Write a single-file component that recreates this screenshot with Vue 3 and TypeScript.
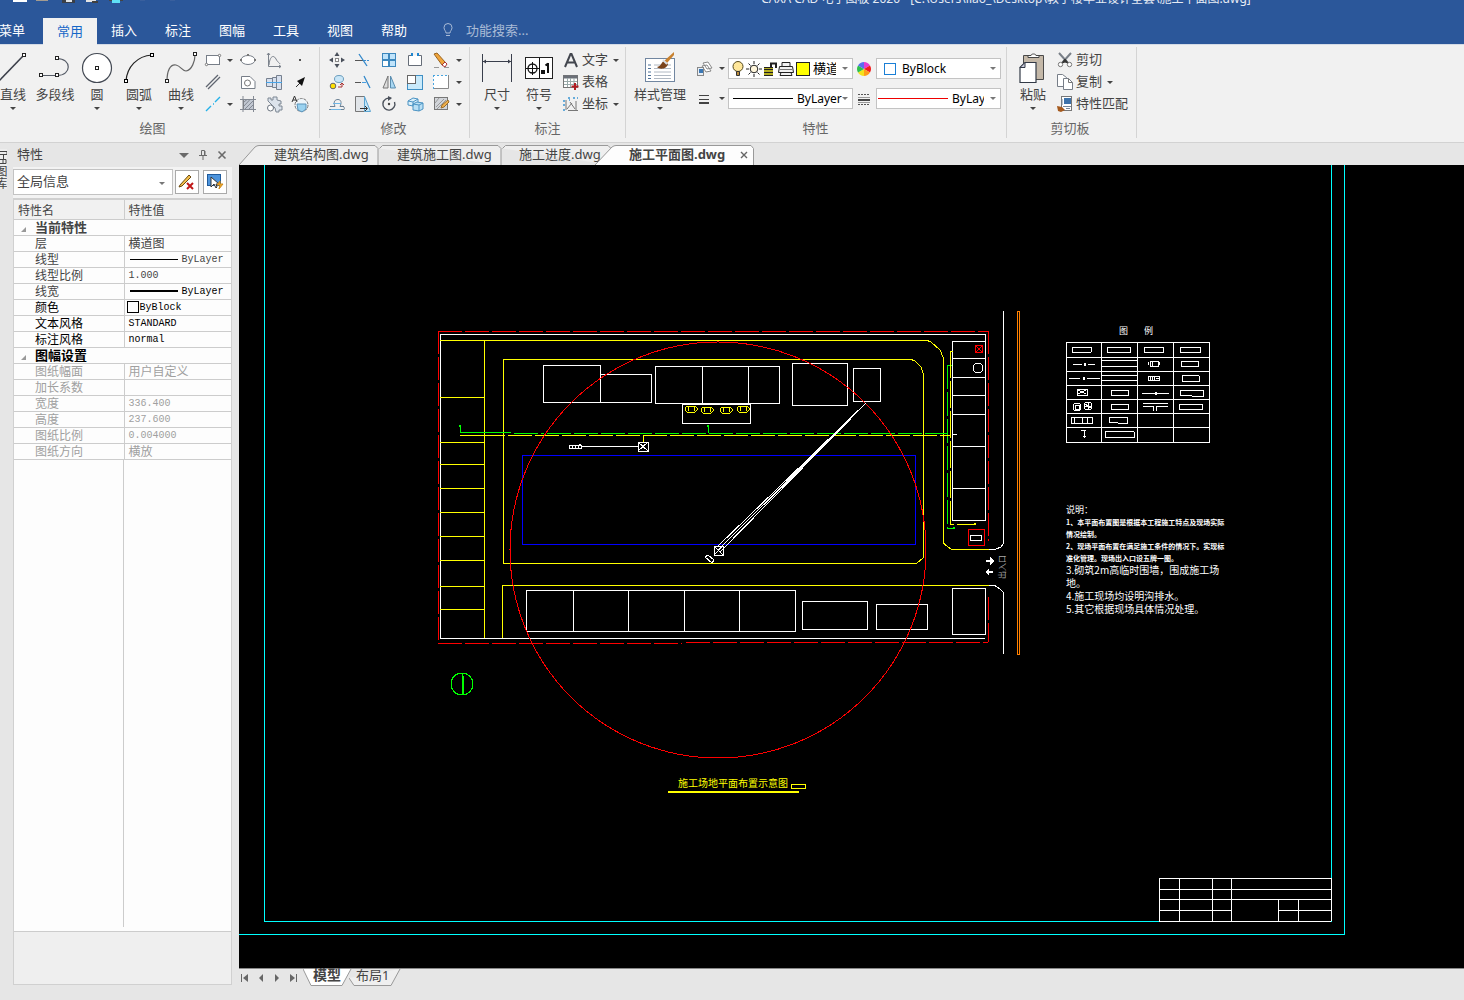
<script setup lang="ts">
import { ref } from 'vue'

interface BigTool { label: string; icon: string; arrow: boolean }
interface PropRow { name: string; value: string; tone: string; line?: number; swatch?: boolean }

const menus = ['菜单', '常用', '插入', '标注', '图幅', '工具', '视图', '帮助']
const activeMenu = ref('常用')

const drawTools: BigTool[] = [
  { label: '直线', icon: 'line', arrow: true },
  { label: '多段线', icon: 'polyline', arrow: false },
  { label: '圆', icon: 'circle', arrow: true },
  { label: '圆弧', icon: 'arc', arrow: true },
  { label: '曲线', icon: 'spline', arrow: true },
]
const dimTools: BigTool[] = [
  { label: '尺寸', icon: 'dimension', arrow: true },
  { label: '符号', icon: 'symbol', arrow: true },
]
const drawGrid = ['rect', '>', 'ellipse', 'formula', 'point', 'parallel', '', 'hole', 'shaft', 'leader', 'center', '>', 'hatch', 'gear', 'detail']
const modifyGrid = ['move', 'trim', 'array', 'break', 'erase', '>', 'copyMove', 'extend', 'mirror', 'scale', 'stretch', '>', 'offset', 'chamfer', 'rotate', 'explode', 'edit', '>']
const dimRows = [
  { label: '文字', icon: 'text', arrow: true },
  { label: '表格', icon: 'table', arrow: false },
  { label: '坐标', icon: 'coord', arrow: true },
]
const clipRows = [
  { label: '剪切', icon: 'cut', arrow: false },
  { label: '复制', icon: 'copy', arrow: true },
  { label: '特性匹配', icon: 'match', arrow: false },
]

const big: Record<string, string> = {
  line: '<path d="M3 30 28 4" stroke="#3b3f4a" stroke-width="1.6"/><rect x="26.500" y="2.500" width="3" height="3" fill="#fff" stroke="#222"/>',
  polyline: '<path d="M3 24.500H19M19 24.500C34 24.500 34 7.500 19 7.500" stroke="#555b66" fill="none" stroke-width="1.2"/><g fill="#fff" stroke="#222"><rect x="1.500" y="22.500" width="3" height="3"/><rect x="17.500" y="22.500" width="3" height="3"/><rect x="17.500" y="5.500" width="3" height="3"/></g>',
  circle: '<circle cx="17" cy="17" r="14.5" fill="#fff" stroke="#444a54" stroke-width="1.2"/><rect x="15.500" y="15.500" width="3" height="3" fill="#fff" stroke="#222"/>',
  arc: '<path d="M4 30C5 16 15 5 30 4" stroke="#222" fill="none" stroke-width="1.2"/><g fill="#fff" stroke="#000"><rect x="2.500" y="28.500" width="3" height="3"/><rect x="28.500" y="2.500" width="3" height="3"/></g>',
  spline: '<path d="M3 30C3 20 6 13 12 14C17 15 18 20 22 20C28 19 31 10 31 4" stroke="#666" fill="none" stroke-width="1.2"/><g fill="#fff" stroke="#222"><rect x="1.500" y="28.500" width="3" height="3"/><rect x="29.500" y="1.500" width="3" height="3"/></g>',
  dimension: '<path d="M2.500 3V31M31.500 3V31M3 10.500H31" stroke="#3a3f4c" fill="none"/><path d="M3 10.500 6 8.500V12.500ZM31 10.500 28 8.500V12.500Z" fill="#3a3f4c"/>',
  symbol: '<rect x="3.500" y="6.500" width="27" height="21" fill="#fff" stroke="#222"/><path d="M17.500 7V27M4 17.500H17M10.500 11V24" stroke="#111" fill="none"/><circle cx="10.500" cy="17.500" r="4.500" fill="none" stroke="#111" stroke-width="1.300"/><path d="M20 20h2v2h-2zM26 12v10M23.500 14.500 26 12.500" fill="none" stroke="#111" stroke-width="2"/>',
  style: '<rect x="2.500" y="7.500" width="29" height="23" fill="#fff" stroke="#7186a0"/><path d="M5 14h3M5 17.500h3M5 21h3M5 24.500h3M5 27.500h3" stroke="#4f7299"/><path d="M11 14h17M11 17.500h17M11 21h17M11 24.500h17M11 27.500h17" stroke="#b0b8c2"/><path d="M31 1 21 10 24 12 31 4Z" fill="#c8812f"/><path d="M22 10c-4 0-3 5-8 6 3 3 10 2 11-3z" fill="#7a431b"/><path d="M20 9l4 4" stroke="#d9dde2" stroke-width="2"/>',
  paste: '<path d="M7.500 4.500h20v24h-20z" fill="#c4b8a8" stroke="#4a4a4a"/><path d="M12 6.500v-2h3c0-2 5-2 5 0h3v2z" fill="#fff" stroke="#444"/><path d="M4 16.500l5-5h11v20H4z" fill="#fff" stroke="#333a47" stroke-width="1.200"/><path d="M4 16.500h5v-5z" fill="#ccd" stroke="#333a47"/>',
}

const small: Record<string, string> = {
  rect: '<rect x="2.500" y="4.500" width="13" height="9" fill="#fff" stroke="#777e88"/><circle cx="2.500" cy="13.500" r="1.200" fill="#fff" stroke="#777"/><circle cx="15.500" cy="4.500" r="1.200" fill="#fff" stroke="#777"/>',
  ellipse: '<ellipse cx="9" cy="9" rx="7" ry="4.500" fill="#fff" stroke="#777e88"/><g fill="#777"><path d="M1 8h2v2H1zM15 8h2v2h-2zM8 3h2v2H8z"/></g>',
  formula: '<path d="M3.500 2V15.500H16M2 4l1.500-2L5 4M14 14l2 1.500L14 17M4 14C5 4 9 4 11 8S14 11 15 13" stroke="#7b828c" fill="none"/>',
  point: '<path d="M8 8h2v2H8z" fill="#555"/>',
  parallel: '<path d="M2 14 14 2M4 16 16 4" stroke="#5f6570" stroke-width="1.300"/>',
  hole: '<path d="M2.500 3.500H11l5 5v7H2.500z" fill="#fff" stroke="#777e88"/><circle cx="8.500" cy="10" r="3" fill="#fff" stroke="#777"/>',
  shaft: '<path d="M1.500 5.500h6v8h-6zM7.500 4.500h4v10h-4zM11.500 2.500h5v14h-5z" fill="#d7e0ee" stroke="#76808f"/><path d="M1 9.500H17" stroke="#47a4e8"/>',
  leader: '<path d="M5 14 9 10" stroke="#333"/><path d="M14 4 11 13 6 8Z" fill="#111"/>',
  center: '<path d="M2 16 7 11M9 9h1M11 7l5-5" stroke="#24b1e8" stroke-width="1.400"/>',
  hatch: '<path d="M4.500 4.500h10v10h-10z" fill="#c2c8d2" stroke="#777"/><path d="M4 1V17M14.500 1V17M1 4.500H17M1 14.500H17M5 7l3-2.500M5 11l6-6.500M6 14l8-8M10 14l4-4" stroke="#838993" fill="none"/>',
  gear: '<path d="M3 6V3h3v2h2V2h4v3l4 1v3h-2v2h3v4h-3v2h-3l-1-4-4-4z" fill="#dce3ec" stroke="#7d8793"/><circle cx="5.500" cy="13" r="3" fill="#fff" stroke="#6b7480"/>',
  detail: '<circle cx="10.500" cy="10" r="6.500" fill="#eef5fa" stroke="#777" stroke-dasharray="3 1"/><path d="M6 9h9v5l-4 3-4-2z" fill="#9ad2f0" stroke="#5a93ba"/><path d="M1 7 3.500 1 6 7M2 5h3" stroke="#333" fill="none"/>',
  move: '<rect x="7.500" y="7.500" width="3" height="3" fill="#fff" stroke="#888"/><path d="M9 1l2.500 4h-5zM9 17l2.500-4h-5zM1 9l4-2.500v5zM17 9l-4-2.500v5z" fill="#4a505b"/>',
  trim: '<path d="M1 9.500H9" stroke="#555"/><path d="M10 9.500h6" stroke="#3f8fd0" stroke-dasharray="2 1"/><path d="M5 3l8 12" stroke="#2f86c9" stroke-width="1.300"/>',
  array: '<g stroke="#3c87bd" fill="#bfe3fa"><rect x="2.500" y="2.500" width="6" height="6"/><rect x="9.500" y="2.500" width="6" height="6"/><rect x="9.500" y="9.500" width="6" height="6"/><rect x="2.500" y="9.500" width="6" height="6" fill="#fff"/></g>',
  break: '<path d="M5 4.500H2.500v10h13v-10H13" stroke="#666d78" fill="#fff"/><path d="M5 2h2v3H5zM11 2h2v3h-2z" fill="#1e86d0"/>',
  erase: '<path d="M2 3l3-1 8 9-3 3z" fill="#f0a53c" stroke="#9a6420"/><path d="M10 14l3-3 2 2-2 3z" fill="#fff" stroke="#a33"/><path d="M2 16.500h5M12 16.500h5" stroke="#999"/>',
  copyMove: '<circle cx="5" cy="13" r="2.800" fill="#ffe000" stroke="#666"/><ellipse cx="11" cy="6" rx="4.500" ry="3.500" fill="#c9e6f7" stroke="#6b9dbd"/><path d="M10 14h4v-4M12 12l2-2 2 2" stroke="#a33" fill="none"/>',
  extend: '<path d="M1 9.500h6" stroke="#555"/><path d="M8 9.500h4" stroke="#4a9fe0"/><path d="M10 3l6 12" stroke="#2f86c9" stroke-width="1.300"/>',
  mirror: '<path d="M8 3v12H3z" fill="#ddd" stroke="#777"/><path d="M10.500 3v12h5z" fill="#a9d8f3" stroke="#5a8db0"/>',
  scale: '<rect x="1.500" y="2.500" width="15" height="14" fill="#c9eafb" stroke="#3f8fc4"/><rect x="1.500" y="2.500" width="8" height="8" fill="#fff" stroke="#666"/>',
  stretch: '<rect x="1.500" y="2.500" width="15" height="13" fill="#fff"/><path d="M16.500 2V15.500H1" stroke="#888" fill="none"/><path d="M1 2.500h16M1.500 2v14" stroke="#49a5df" stroke-dasharray="2 2"/>',
  offset: '<path d="M2 11.500h5c-2-5 0-7 3-7s4 3 2 7h4M1 14.500h15c1-1 0-4-3-3" stroke="#6d8295" fill="none"/><path d="M5 8.500h8M3 14.500h10" stroke="#6fb6e4"/>',
  chamfer: '<path d="M1.500 1.500h9v15h-9z" fill="#e1e5e9" stroke="#777"/><path d="M10.500 1.500l6 15h-6z" fill="#c3e5f8" stroke="#5ba4d1"/><path d="M6 13.500h7M11 11l2.500 2.500L11 16" stroke="#333" fill="none"/>',
  rotate: '<path d="M11 3.500A6 6 0 1 0 14.500 7" stroke="#4b515b" fill="none" stroke-width="1.400"/><path d="M8 1v5l4-3z" fill="#4b515b"/><circle cx="9" cy="9" r="1.200" fill="#444"/>',
  explode: '<path d="M2 6l5-3 5 1v5l-5 2-5-1z" fill="#d9effb" stroke="#4b93c3"/><path d="M7 9l4-2 6 1v6l-4 2-6-1z" fill="#b8dff5" stroke="#4b93c3"/><path d="M2 6l5 1v4M7 7l5-3M7 9l6 1v6M13 10l4-2" stroke="#4b93c3" fill="none"/>',
  edit: '<rect x="2.500" y="2.500" width="13" height="12" fill="#d2d5da" stroke="#777"/><path d="M4 12l8-8M5 14l9-9M3 8l4-5" stroke="#999"/><path d="M9 13l1-3 6-5 1 2-5 5z" fill="#f0b04c" stroke="#9b6c29"/>',
  text: '<path d="M3 16 8.500 3h1L15 16M5 11.500h8" stroke="#42464e" stroke-width="2" fill="none"/>',
  table: '<rect x="1.500" y="2.500" width="14" height="12" fill="#fff" stroke="#777"/><path d="M1.500 2.500h14v3h-14z" fill="#6b7078"/><path d="M2 8.500h13M2 11.500h13M5.500 5v9M8.500 5v9M12 5v9" stroke="#9aa"/><path d="M13 10v7M9.500 13.500h7" stroke="#b01c22" stroke-width="2"/>',
  coord: '<path d="M4 5v10M6 15.500h10M5 14l5-6M8 7l5 7M14 6v9" stroke="#777" fill="none"/><path d="M1 6h2M1 10h2M1 15h2M6 3h2M11 3h2M15 3h1M7 5h1" stroke="#3a95d2" stroke-width="1.500"/>',
  cut: '<path d="M3 2l9 10M15 2L6 12" stroke="#7a8088" stroke-width="2"/><path d="M6 12l3-4 3 4-3-1z" fill="#333" stroke="#333"/><circle cx="4.500" cy="13.500" r="2.200" fill="#fff" stroke="#777"/><circle cx="13.500" cy="13.500" r="2.200" fill="#fff" stroke="#777"/>',
  copy: '<path d="M1.500 1.500h5l4 3v9h-9z" fill="#fff" stroke="#777e88"/><path d="M7.500 5.500h5l4 4v7h-9z" fill="#fff" stroke="#777e88"/><path d="M12.500 5.500v4h4" fill="none" stroke="#777"/>',
  match: '<rect x="5.500" y="1.500" width="10" height="14" fill="#fff" stroke="#777"/><path d="M8 3h7v6H8z" fill="#3d72aa"/><path d="M6 4v6M7 11.500h8M10 13.500h4" stroke="#789"/><path d="M1 11l5 1 3 3-4 2-3-1z" fill="#a55a1e"/>',
  layer: '<path d="M8 3l5-1 4 6-5 1zM7 6l5-1 4 6-5 1z" fill="#fff" stroke="#888"/><rect x="2.500" y="7.500" width="6" height="8" fill="#e8eef5" stroke="#888"/><rect x="4" y="9" width="4" height="4" fill="#3b78b5"/>',
  weight: '<path d="M4 5.500h10M4 9.500h10" stroke="#444"/><path d="M4 13h10" stroke="#444" stroke-width="2"/>',
  wheel: '<path d="M9 9V2a7 7 0 0 1 6 3.500z" fill="#e63bd0"/><path d="M9 9l6-3.500a7 7 0 0 1 0 7z" fill="#f21c1c"/><path d="M9 9l6 3.500A7 7 0 0 1 9 16z" fill="#ff9c1a"/><path d="M9 9v7a7 7 0 0 1-6-3.500z" fill="#f4e21c"/><path d="M9 9l-6 3.500a7 7 0 0 1 0-7z" fill="#2ec04c"/><path d="M9 9 3 5.500A7 7 0 0 1 9 2z" fill="#5a6cf0"/>',
  ltype: '<path d="M3 4.500h12M3 14.500h12" stroke="#555" stroke-dasharray="2 1"/><path d="M3 7.500h12M3 12.500h12" stroke="#999"/><path d="M3 10h12" stroke="#444" stroke-width="2"/>',
  bulb: '<circle cx="9" cy="6.500" r="5" fill="#ffe79a" stroke="#55491c"/><path d="M7.500 11.500h3v4h-3z" fill="#b98c3c" stroke="#333"/>',
  sun: '<circle cx="9" cy="9" r="3.800" fill="#fff6dc" stroke="#222"/><path d="M9 1v3M9 14v3M1 9h3M14 9h3M3.500 3.500l2 2M12.500 12.500l2 2M3.500 14.500l2-2M12.500 5.500l2-2" stroke="#222"/>',
  lock: '<path d="M10 8V3.500h5V8" stroke="#222" fill="none" stroke-width="2"/><path d="M3 7h9v9H3z" fill="#b5ae22"/><path d="M3 7.500h9M3 9.500h9M3 12.500h9M3 15.500h9" stroke="#222"/>',
  printer: '<path d="M5 7V2.500h8V7M2.500 6.500h13l1 6h-15zM4 12.500h10l1 3H3z" fill="#f2f2f2" stroke="#222"/><path d="M3 9.500h12" stroke="#777"/>',
}

const docs = [
  { name: '建筑结构图.dwg', kind: 'first' },
  { name: '建筑施工图.dwg', kind: 'mid' },
  { name: '施工进度.dwg', kind: 'last' },
]

const current: PropRow[] = [
  { name: '层', value: '横道图', tone: 'mid' },
  { name: '线型', value: 'ByLayer', tone: 'mid', line: 1 },
  { name: '线型比例', value: '1.000', tone: 'mid' },
  { name: '线宽', value: 'ByLayer', tone: 'mid strong', line: 2 },
  { name: '颜色', value: 'ByBlock', tone: 'dark', swatch: true },
  { name: '文本风格', value: 'STANDARD', tone: 'dark' },
  { name: '标注风格', value: 'normal', tone: 'dark' },
]
const sheet: PropRow[] = [
  { name: '图纸幅面', value: '用户自定义', tone: 'dim' },
  { name: '加长系数', value: '', tone: 'dim' },
  { name: '宽度', value: '336.400', tone: 'dim' },
  { name: '高度', value: '237.600', tone: 'dim' },
  { name: '图纸比例', value: '0.004000', tone: 'dim' },
  { name: '图纸方向', value: '横放', tone: 'dim' },
]
const sections = [
  { title: '当前特性', tone: 'mid', rows: current },
  { title: '图幅设置', tone: 'dark', rows: sheet },
]

const notes = [
  { y: 513, s: 9, t: '说明：' },
  { y: 525, s: 7, t: '1、本平面布置图是根据本工程施工特点及现场实际' },
  { y: 537, s: 7, t: '情况绘制。' },
  { y: 549, s: 7, t: '2、现场平面布置在满足施工条件的情况下。实现标' },
  { y: 561, s: 7, t: '准化管理。现场出入口设五牌一图。' },
  { y: 574, s: 10, t: '3.砌筑2m高临时围墙，围成施工场' },
  { y: 587, s: 10, t: '地。' },
  { y: 600, s: 10, t: '4.施工现场均设明沟排水。' },
  { y: 613, s: 10, t: '5.其它根据现场具体情况处理。' },
]
const plots = [397, 442, 464, 488, 512, 536, 560, 586, 609]
const sheds = [341, 358, 377, 395, 414, 446, 488]
const loaders = [{ x: 691, y: 409 }, { x: 707, y: 410 }, { x: 726, y: 410 }, { x: 743, y: 409 }]
</script>

<template>
  <div class="app">
    <header class="titlebar">
      <div class="quick">
        <svg width="190" height="4" viewBox="0 0 190 4">
          <path d="M13 0h14v2H13z" fill="#fff" />
          <path d="M36 0h12v1H36z" fill="#a39b90" />
          <path d="M62 0h13v3H62z" fill="#3a3f48" /><path d="M66 0h6v2h-6z" fill="#dfe3e8" />
          <path d="M86 0h10v2H86z" fill="#e4e4e4" /><path d="M92 1h6v2h-6z" fill="#404040" />
          <path d="M109 0h14v1h-14z" fill="#444" /><path d="M112 0h8v3h-8z" fill="#5fe0f5" />
          <path d="M140 0h5M170 0h5" stroke="#48699f" />
        </svg>
      </div>
      <div class="caption">CAXA CAD 电子图板 2020 - [C:\Users\liao_\Desktop\教学楼毕业设计全套\施工平面图.dwg]</div>
    </header>
    <nav class="menu">
      <button v-for="m in menus" :key="m" type="button" :class="{ on: m === activeMenu }" @click="activeMenu = m">{{ m }}</button>
      <label class="find">
        <svg width="14" height="16" viewBox="0 0 14 16"><path d="M5 11C5 9 3 8 3 5.500a4 4 0 0 1 8 0C11 8 9 9 9 11zM5 13.500h4" fill="none" stroke="#a9bbd6" /></svg>
        <input type="text" placeholder="功能搜索..." aria-label="功能搜索">
      </label>
    </nav>

    <div class="ribbon">
      <section class="group draw">
        <div class="body">
          <button v-for="t in drawTools" :key="t.label" type="button" class="big">
            <svg width="34" height="34" viewBox="0 0 34 34" v-html="big[t.icon]" />
            <span>{{ t.label }}</span>
            <i v-if="t.arrow" class="tri" />
          </button>
          <div class="grid g-draw">
            <template v-for="(n, i) in drawGrid" :key="i">
              <button v-if="n === '>'" type="button" class="sm" aria-label="更多"><i class="tri" /></button>
              <button v-else-if="n" type="button" class="sm" :aria-label="n"><svg width="18" height="18" viewBox="0 0 18 18" v-html="small[n]" /></button>
              <span v-else />
            </template>
          </div>
        </div>
        <h2>绘图</h2>
      </section>

      <section class="group modify">
        <div class="body">
          <div class="grid g-mod">
            <template v-for="(n, i) in modifyGrid" :key="i">
              <button v-if="n === '>'" type="button" class="sm" aria-label="更多"><i class="tri" /></button>
              <button v-else type="button" class="sm" :aria-label="n"><svg width="18" height="18" viewBox="0 0 18 18" v-html="small[n]" /></button>
            </template>
          </div>
        </div>
        <h2>修改</h2>
      </section>

      <section class="group dims">
        <div class="body">
          <button v-for="t in dimTools" :key="t.label" type="button" class="big">
            <svg width="34" height="34" viewBox="0 0 34 34" v-html="big[t.icon]" />
            <span>{{ t.label }}</span><i class="tri" />
          </button>
          <div class="rows">
            <button v-for="r in dimRows" :key="r.label" type="button" class="row">
              <svg width="18" height="18" viewBox="0 0 18 18" v-html="small[r.icon]" /><span>{{ r.label }}</span><i v-if="r.arrow" class="tri" />
            </button>
          </div>
        </div>
        <h2>标注</h2>
      </section>

      <section class="group props">
        <div class="body">
          <button type="button" class="big wide">
            <svg width="34" height="34" viewBox="0 0 34 34" v-html="big.style" />
            <span>样式管理</span><i class="tri" />
          </button>
          <div class="combos">
            <div class="crow">
              <button type="button" class="pick" aria-label="图层"><svg width="18" height="18" viewBox="0 0 18 18" v-html="small.layer" /><i class="tri" /></button>
              <div class="combo">
                <svg v-for="n in ['bulb', 'sun', 'lock', 'printer']" :key="n" class="mini" width="18" height="18" viewBox="0 0 18 18" v-html="small[n]" />
                <span class="yellow" />
                <select aria-label="当前图层" class="layer"><option>横道图</option></select><i class="tri grey" />
              </div>
              <svg class="mid-icon" width="18" height="18" viewBox="0 0 18 18" v-html="small.wheel" />
              <div class="combo">
                <span class="blue" />
                <select aria-label="颜色"><option>ByBlock</option></select><i class="tri grey" />
              </div>
            </div>
            <div class="crow">
              <button type="button" class="pick" aria-label="线宽设置"><svg width="18" height="18" viewBox="0 0 18 18" v-html="small.weight" /><i class="tri" /></button>
              <div class="combo">
                <span class="rule" />
                <select aria-label="线宽" class="full"><option>ByLayer</option></select><i class="tri grey" />
              </div>
              <svg class="mid-icon" width="18" height="18" viewBox="0 0 18 18" v-html="small.ltype" />
              <div class="combo">
                <span class="rule red" />
                <select aria-label="线型"><option>ByLayer</option></select><i class="tri grey" />
              </div>
            </div>
          </div>
        </div>
        <h2>特性</h2>
      </section>

      <section class="group clip">
        <div class="body">
          <button type="button" class="big">
            <svg width="34" height="34" viewBox="0 0 34 34" v-html="big.paste" />
            <span>粘贴</span><i class="tri" />
          </button>
          <div class="rows">
            <button v-for="r in clipRows" :key="r.label" type="button" class="row">
              <svg width="18" height="18" viewBox="0 0 18 18" v-html="small[r.icon]" /><span>{{ r.label }}</span><i v-if="r.arrow" class="tri" />
            </button>
          </div>
        </div>
        <h2>剪切板</h2>
      </section>
    </div>

    <div class="work">
      <aside class="strip">
        <button type="button">
          <svg width="8" height="16" viewBox="0 0 8 16"><path d="M0 2.500h7v3H0M3.500 6v4M0 10.500h6v4H0M3 10v4" fill="none" stroke="#444" /></svg>
          <span>图库</span>
        </button>
      </aside>

      <aside class="panel">
        <div class="phead">
          <h2>特性</h2>
          <button type="button" aria-label="菜单"><svg width="10" height="10" viewBox="0 0 10 10"><path d="M0 3h10L5 8z" fill="#6a6a6a" /></svg></button>
          <button type="button" aria-label="固定"><svg width="10" height="10" viewBox="0 0 10 10"><path d="M3.500 5V.500h3V5M7 1v4M1 5.500h8M5 6v4" fill="none" stroke="#6a6a6a" /></svg></button>
          <button type="button" aria-label="关闭"><svg width="10" height="10" viewBox="0 0 10 10"><path d="M1.500 1.500l7 7M8.500 1.500l-7 7" stroke="#6a6a6a" stroke-width="1.600" /></svg></button>
        </div>
        <div class="ptools">
          <div class="combo scope"><select aria-label="选择对象"><option>全局信息</option></select><i class="tri grey" /></div>
          <button type="button" aria-label="快速编辑"><svg width="18" height="18" viewBox="0 0 18 18"><path d="M2 12l9-10 2 2-9 9-3 1z" fill="#f5c04a" stroke="#6b4a12" /><path d="M9 10l6 6M15 10l-6 6" stroke="#c01818" stroke-width="2" /></svg></button>
          <button type="button" aria-label="快速选择"><svg width="18" height="18" viewBox="0 0 18 18"><rect x="1.500" y="1.500" width="13" height="11" fill="#4d94dc" stroke="#1e5a9c" /><path d="M5 4v10l3-3 2 4 1-1-1-3h3z" fill="#fff" stroke="#333" /><path d="M14 8l-3 4h3l-1 4 4-5h-3z" fill="#ffb52a" stroke="#c8851a" /></svg></button>
        </div>
        <div class="sheet">
          <table>
            <colgroup><col class="c1"><col></colgroup>
            <thead><tr><th scope="col">特性名</th><th scope="col">特性值</th></tr></thead>
            <tbody v-for="s in sections" :key="s.title">
              <tr><th colspan="2" scope="rowgroup" class="sec" :class="s.tone"><svg width="5" height="5" viewBox="0 0 5 5"><path d="M5 0v5H0z" fill="#999" /></svg>{{ s.title }}</th></tr>
              <tr v-for="r in s.rows" :key="r.name" :class="r.tone">
                <td>{{ r.name }}</td>
                <td>
                  <div class="val">
                    <hr v-if="r.line" :class="{ thick: r.line === 2 }">
                    <span v-if="r.swatch" class="sw" />
                    <span :class="{ code: /^[\w.]+$/.test(r.value) }">{{ r.value }}</span>
                  </div>
                </td>
              </tr>
            </tbody>
          </table>
          <div class="filler" />
          <div class="hint" />
        </div>
      </aside>

      <main class="view">
        <div class="docs">
          <button v-for="d in docs" :key="d.name" type="button" class="doc" :class="d.kind">
            <svg v-if="d.kind === 'first'" width="140" height="20" viewBox="0 0 140 20"><path d="M0 20 16 2Q18 .5 20 .5H136l3 3V20" fill="#efefef" stroke="#999" /></svg>
            <svg v-else-if="d.kind === 'mid'" width="123" height="20" viewBox="0 0 123 20"><path d="M.5 3.500l3-3H119l3 3V20" fill="#efefef" stroke="#999" /></svg>
            <svg v-else width="110" height="20" viewBox="0 0 110 20"><path d="M.5 3.500l3-3H106l3 3V20" fill="#efefef" stroke="#999" /></svg>
            <span>{{ d.name }}</span>
          </button>
          <div class="doc on">
            <svg width="159" height="20" viewBox="0 0 159 20"><path d="M0 20 17 2Q19 .5 21 .5H156l2.500 3V20" fill="#fdfdfd" stroke="#999" /></svg>
            <span>施工平面图.dwg</span>
            <button type="button" aria-label="关闭"><svg width="8" height="8" viewBox="0 0 8 8"><path d="M1 1l6 6M7 1L1 7" stroke="#666" stroke-width="1.400" /></svg></button>
          </div>
        </div>

        <div class="canvas">
          <svg viewBox="239 165 1225 803" preserveAspectRatio="xMinYMin meet" fill="none" shape-rendering="crispEdges">
            <!-- sheet frames -->
            <path d="M239 934H1344V165M264 165V921H1331V165" stroke="#00ffff" />
            <path d="M1159 921V878H1331V921M1159 889H1331M1159 899H1331M1159 910H1231M1278 910H1331M1159 921H1331M1179 878V921M1212 878V921M1231 878V921M1278 899V921M1298 899V921" stroke="#fff" />

            <!-- site boundary -->
            <g stroke="#f00">
              <path d="M438 331H988" stroke-dasharray="24 3" />
              <path d="M438 331V643M988 331V541M988 597V642" stroke-dasharray="23 3" />
              <path d="M438 643H682" stroke-dasharray="24 3" />
              <path d="M686 642H988" stroke-dasharray="24 3" />
            </g>
            <path d="M985 341V334H440V638H985" stroke="#fff" />

            <!-- roads -->
            <g stroke="#ff0">
              <path d="M440 340H926L931 342L940 350L943 357V543L951 549H989" />
              <path d="M484 340V638" />
              <path v-for="y in plots" :key="y" :d="`M440 ${y}H484`" />
              <path d="M503 359H910L915 361L921 367L923 373V558L917 563H503Z" />
              <path d="M502 638V585H989" />
            </g>
            <path d="M989 549H996L1001 547L1003 544V311M989 585H994L1000 589L1003 592V654" stroke="#fff" />
            <rect x="1017" y="311" width="2" height="343" stroke="#ff8000" />

            <!-- buildings -->
            <g stroke="#fff">
              <path d="M543 365H600V402H543ZM600 374H651V402H600M655 366H779V403H655ZM702 366V403M748 366V403M682 404H750V423H682ZM792 363H847V405H792ZM853 368H880V401H853Z" />
              <path d="M526 590H795V631H526ZM573 590V631M628 590V631M684 590V631M739 590V631M802 601H867V629H802ZM876 604H927V629H876ZM952 588H985V634H952Z" />
              <path d="M952 341H985V520H952Z" />
              <path v-for="y in sheds" :key="y" :d="`M952 ${y}H985`" />
              <circle cx="978" cy="368" r="5" />
            </g>
            <path d="M522 455H915V544H522Z" stroke="#00f" />
            <g stroke="#ff0">
              <path v-for="l in loaders" :key="l.x" :d="`M${l.x - 4} ${l.y - 3}h8l2 2v2l-2 2h-8l-2-2v-2zM${l.x - 3} ${l.y - 2}v4M${l.x + 3} ${l.y - 2}v4`" />
            </g>

            <!-- water and power -->
            <path d="M460 426V432H511M708 427V433M947 365H952M947 528H954M459 427l1-2 1 2M707 427l1-2 1 2M953 528l1-1 1 1-1 1z" stroke="#0f0" />
            <path d="M514 433H544M547 433H947" stroke="#0f0" stroke-dasharray="24 3" />
            <path d="M947 365V528" stroke="#0f0" stroke-dasharray="24 3" />
            <path d="M460 435H505M643 435V442M950 351H953M974 524l1-1 1 1-1 1z" stroke="#ff0" />
            <path d="M508 435H950" stroke="#ff0" stroke-dasharray="24 3" />
            <path d="M950 351V524H975" stroke="#ff0" stroke-dasharray="27 3" />
            <path d="M952 434H957" stroke="#fff" />

            <!-- hoist -->
            <path d="M582 446H638M638 442H648V451H638ZM638 442L648 451M648 442L638 451M569 445H581V448H569ZM572 445V448M575 445V448M578 445V448M579 444H581" stroke="#fff" />

            <!-- tower crane -->
            <circle cx="718" cy="550" r="208" stroke="#f00" />
            <g stroke="#fff">
              <path d="M714 546H723V555H714ZM714 546L723 555M723 546L714 555M866 403L717 547M866 403L718 550M866 403L720 552M811 457L792 478" />
              <path d="M708 555L714 560L712 563L705 557Z" />
            </g>

            <!-- fire point and gate -->
            <circle cx="979" cy="349" r="4" stroke="#f00" /><circle cx="979" cy="349" r="1" stroke="#f00" />
            <path d="M975 345l8 8M983 345l-8 8M968 529H984V545H968Z" stroke="#f00" />
            <path d="M970 535H981V540H970Z" stroke="#fff" />
            <path d="M986 560h4v-3l4 4-4 4v-3h-4zM993 571h-4v-3l-4 4 4 4v-3h4z" fill="#fff" />
            <text transform="translate(1005 579) rotate(-90)" font-size="8" fill="#aaa">出入口</text>

            <!-- north mark -->
            <circle cx="462" cy="684" r="11" stroke="#0f0" />
            <path d="M462 673V695" stroke="#0f0" />
            <path d="M463 676V694" stroke="#0f0" />

            <!-- drawing title -->
            <text x="678" y="787" font-size="10" fill="#ff0">施工场地平面布置示意图</text>
            <path d="M668 792H799" stroke="#ff0" stroke-width="2" />
            <path d="M791 784H805V788H791Z" stroke="#ff0" />

            <!-- legend -->
            <text x="1119" y="334" font-size="9" fill="#fff">图</text>
            <text x="1144" y="334" font-size="9" fill="#fff">例</text>
            <g stroke="#fff">
              <path d="M1066 342H1209V442H1066ZM1101 342V442M1137 342V442M1173 342V442M1066 357H1209M1066 371H1209M1066 385H1209M1066 399H1209M1066 413H1209M1066 427H1209" />
              <path d="M1072 347H1092L1091 352H1072ZM1107 347H1130V352H1107ZM1144 347H1163V352H1144ZM1180 347H1200V352H1180Z" />
              <path d="M1073 364H1082M1084 363v3M1085 363v3M1088 364H1095M1102 360H1119L1137 361V366H1102M1150 361h8v5h-8zM1148 362v3M1159 362v3M1152 361v5M1181 361H1198V366H1181Z" />
              <path d="M1069 378H1080M1083 377v3M1084 377v3M1087 378H1100M1102 375H1119L1137 376V381L1119 380H1102M1148 376H1159V380H1148ZM1150 376v4M1152 376v4M1154 376v4M1156 378h3M1182 375H1190L1199 376V381H1182Z" />
              <path d="M1077 389H1087V395H1077ZM1078 390l8 4M1086 390l-8 4M1111 390H1128V395H1111ZM1142 393H1169M1155 392v3M1156 392v3M1180 390H1203V396H1192L1180 395Z" />
              <circle cx="1077" cy="407" r="4" /><circle cx="1088" cy="406" r="4" />
              <path d="M1075 405h4v4h-4zM1088 402v8M1084 406h8M1085 404l6 4M1111 404H1128V409H1111ZM1143 403H1168M1143 406H1153V411M1156 411V406H1168M1179 404H1202V409H1179Z" />
              <path d="M1071 417H1092V423H1071ZM1074 417v6M1082 417v6M1087 417v6M1109 417H1127V423H1118L1109 422ZM1081 430H1086M1084 430V438M1083 436h3M1105 431H1119L1134 432V437H1105Z" />
            </g>
            <g fill="#fff">
              <text v-for="n in notes" :key="n.y" x="1066" :y="n.y" :font-size="n.s" :font-weight="n.s === 7 ? 700 : 400">{{ n.t }}</text>
            </g>
          </svg>
        </div>

        <footer class="layouts">
          <button type="button" class="nav" aria-label="第一个"><svg width="8" height="8" viewBox="0 0 8 8"><path d="M.5 0v8" stroke="#666" /><path d="M7 0v8L2 4z" fill="#666" /></svg></button>
          <button type="button" class="nav" aria-label="上一个"><svg width="8" height="8" viewBox="0 0 8 8"><path d="M6 0v8L2 4z" fill="#666" /></svg></button>
          <button type="button" class="nav" aria-label="下一个"><svg width="8" height="8" viewBox="0 0 8 8"><path d="M2 0v8l4-4z" fill="#666" /></svg></button>
          <button type="button" class="nav" aria-label="最后一个"><svg width="8" height="8" viewBox="0 0 8 8"><path d="M1 0v8l5-4z" fill="#666" /><path d="M7.500 0v8" stroke="#666" /></svg></button>
          <button type="button" class="lay on"><svg width="50" height="17" viewBox="0 0 50 17"><path d="M0 0l8 16.500h31L48 0" fill="#fff" stroke="#999" /></svg><span>模型</span></button>
          <button type="button" class="lay two"><svg width="52" height="17" viewBox="0 0 52 17"><path d="M0 9l5 7.500h37L51 0" fill="#efefef" stroke="#999" /></svg><span>布局1</span></button>
        </footer>
      </main>
    </div>
  </div>
</template>

<style>
body { margin: 0; }
</style>

<style scoped>
* { box-sizing: border-box; }
.app {
  display: flex; flex-direction: column; min-height: 100vh; overflow: hidden;
  background: #e6e6e6; color: #444;
  font: 13px/18px "Noto Sans", "Noto Sans CJK SC", sans-serif;
}
button, select, input { font: inherit; color: inherit; border: 0; background: none; padding: 0; margin: 0; }
svg { display: block; flex: none; }
h2 { margin: 0; font-size: 13px; font-weight: 400; }

.titlebar { display: flex; align-items: flex-start; height: 18px; background: #2b579a; overflow: hidden; }
.quick { flex: 0 0 52%; }
.caption { margin-top: -10px; font-size: 12px; color: #e6ebf4; white-space: nowrap; }
.menu { display: flex; height: 27px; background: #2b579a; border-bottom: 1px solid #d4dbe6; }
.menu > button { width: 54px; flex: none; color: #fff; text-align: center; padding-bottom: 2px; }
.menu > button:first-child { margin-left: -15px; margin-right: 4px; }
.menu > button.on { background: #f1f1f1; color: #1567c8; margin-bottom: -1px; }
.find { display: flex; align-items: center; gap: 11px; margin-left: 20px; padding-bottom: 2px; }
.find input { width: 140px; outline: 0; color: #fff; }
.find input::placeholder { color: #a9bbd6; opacity: 1; }

.ribbon { display: flex; height: 98px; background: #f1f1f1; border-bottom: 1px solid #d2d2d2; }
.group { display: flex; flex-direction: column; flex: none; padding: 4px 6px 0; position: relative; }
.group::after { content: ""; position: absolute; right: 0; top: 2px; bottom: 4px; width: 1px; background: #d4d4d4; }
.group h2 { text-align: center; color: #666; margin-top: 2px; }
.body { display: flex; height: 68px; }
.draw { margin-left: -14px; padding-right: 7px; }
.modify { padding-left: 4px; padding-right: 7px; }
.dims { padding-right: 7px; }
.props { padding-left: 4px; padding-right: 6px; }
.clip { padding-left: 5px; padding-right: 9px; }
.big { width: 42px; display: flex; flex-direction: column; align-items: center; padding-top: 2px; white-space: nowrap; }
.big.wide { width: 60px; }
.tri { display: block; width: 0; height: 0; border: 3px solid transparent; border-top-color: #444; border-bottom: 0; flex: none; }
.big .tri { margin-top: 4px; }
.tri.grey { border-top-color: #777; }
.grid { display: grid; grid-auto-rows: 22px; }
.g-draw { grid-template-columns: 22px 11px 26px 26px 26px; }
.g-mod { grid-template-columns: repeat(5, 26px) 9px; }
.sm { display: flex; align-items: center; justify-content: center; }
.rows { display: flex; flex-direction: column; padding-left: 2px; }
.row { display: flex; align-items: center; gap: 2px; height: 22px; white-space: nowrap; }
.row span { padding-bottom: 2px; }
.row .tri { margin-left: 3px; }
.combos { display: flex; flex-direction: column; gap: 9px; padding: 9px 0 0 5px; }
.crow { display: flex; height: 21px; align-items: center; }
.pick { display: flex; align-items: center; width: 33px; gap: 6px; }
.combo { position: relative; display: flex; align-items: center; width: 125px; height: 21px; background: #fff; border: 1px solid #c3c3c3; color: #000; font-size: 12px; }
.combo select { appearance: none; flex: 1; min-width: 0; height: 100%; padding-right: 16px; outline: 0; white-space: nowrap; overflow: hidden; }
.combo select.full { padding-right: 10px; }
.combo .tri { position: absolute; right: 4px; top: 8px; pointer-events: none; }
.mini { margin-right: -2px; }
.yellow { width: 14px; height: 14px; background: #ff0; border: 1px solid #222; margin: 0 3px; flex: none; }
.combo select.layer { font-size: 13px; padding-bottom: 2px; }
.blue { width: 12px; height: 12px; border: 1px solid #1a7fd6; margin: 0 6px 0 7px; flex: none; }
.rule { width: 60px; height: 1px; background: #000; margin: 0 4px; flex: none; }
.rule.red { width: 70px; margin: 0 4px 0 1px; background: #e00; }
.mid-icon { margin: 0 3px 0 2px; }

.work { display: flex; flex: 1; }
.strip { width: 13px; flex: none; padding-top: 6px; overflow: hidden; }
.strip button { display: flex; flex-direction: column; width: 7px; overflow: hidden; background: #ededed; }
.strip span { writing-mode: vertical-rl; font-size: 12px; line-height: 14px; margin-left: -7px; }
.panel { width: 219px; flex: none; display: flex; flex-direction: column; }
.phead { display: flex; align-items: center; gap: 9px; height: 24px; padding: 0 5px 0 4px; }
.phead h2 { flex: 1; padding-bottom: 2px; }
.ptools { display: flex; align-items: center; gap: 4px; height: 31px; background: #f3f3f3; padding-bottom: 2px; }
.scope { width: 160px; height: 26px; font-size: 13px; color: #444; padding-left: 3px; margin-right: -2px; }
.scope select { padding-bottom: 2px; }
.scope .tri { top: 12px; right: 7px; }
.ptools button { width: 24px; height: 24px; display: flex; align-items: center; justify-content: center; background: #fff; border: 1px solid #aaa; }
.sheet { display: flex; flex-direction: column; flex: 1; margin-bottom: 15px; background: #fdfdfd; border: 1px solid #d0d0d0; border-top-width: 2px; }
table { width: 100%; table-layout: fixed; border-collapse: collapse; font-size: 12px; line-height: 15px; }
.c1 { width: 110px; }
td, th { padding: 0 0 0 4px; height: 16px; font-weight: 400; text-align: left; border-bottom: 1px solid #ccc; }
thead th { height: 19px; padding-top: 2px; background: #f1f1f1; }
thead th + th, td + td { border-left: 1px solid #ccc; }
td:first-child { padding-left: 21px; }
.sec { font-weight: 700; font-size: 13px; padding-left: 7px; }
.sec svg { display: inline-block; margin-right: 9px; }
.dark { color: #000; }
.dim { color: #a0a0a0; }
.val { display: flex; align-items: center; height: 15px; }
.code { font: 10px/15px "Liberation Mono", monospace; }
.strong .code { color: #000; }
.val hr { width: 48px; height: 1px; border: 0; background: #000; margin: 0 4px 0 1px; }
.val hr.thick { height: 2px; }
.sw { width: 12px; height: 12px; border: 1px solid #000; margin: 0 1px 0 -2px; }
.filler { flex: 1; width: 110px; border-right: 1px solid #ccc; margin-bottom: 4px; }
.hint { height: 53px; background: #efefef; border-top: 1px solid #ccc; }

.view { flex: 1; min-width: 0; display: flex; flex-direction: column; margin-left: 7px; }
.docs { display: flex; height: 22px; padding-top: 2px; }
.doc { position: relative; height: 20px; flex: none; text-align: left; white-space: nowrap; }
.doc > svg { position: absolute; left: 0; top: 0; }
.doc span { position: relative; display: block; height: 20px; line-height: 18px; }
.first { width: 140px; padding-left: 35px; }
.mid.doc { width: 123px; padding-left: 18px; }
.last { width: 110px; padding-left: 17px; }
.doc.on { width: 159px; margin-left: -17px; padding: 0 6px 0 34px; display: flex; align-items: center; justify-content: space-between; font-weight: 700; }
.doc.on button { position: relative; }
.canvas { flex: 1; background: #000; overflow: hidden; }
.canvas svg { width: 100%; height: auto; }
.canvas text { font-family: "Noto Sans CJK SC", sans-serif; }
.layouts { display: flex; align-items: center; height: 32px; padding-bottom: 14px; border-top: 1px solid #888; }
.nav { width: 16px; padding-left: 2px; }
.lay { position: relative; height: 17px; width: 50px; text-align: left; white-space: nowrap; }
.lay svg { position: absolute; left: 0; top: 0; }
.lay span { position: relative; display: block; line-height: 12px; height: 17px; }
.lay.on { z-index: 1; font-size: 14px; font-weight: 700; padding-left: 10px; }
.lay.two { margin-left: -4px; padding-left: 7px; }
</style>
